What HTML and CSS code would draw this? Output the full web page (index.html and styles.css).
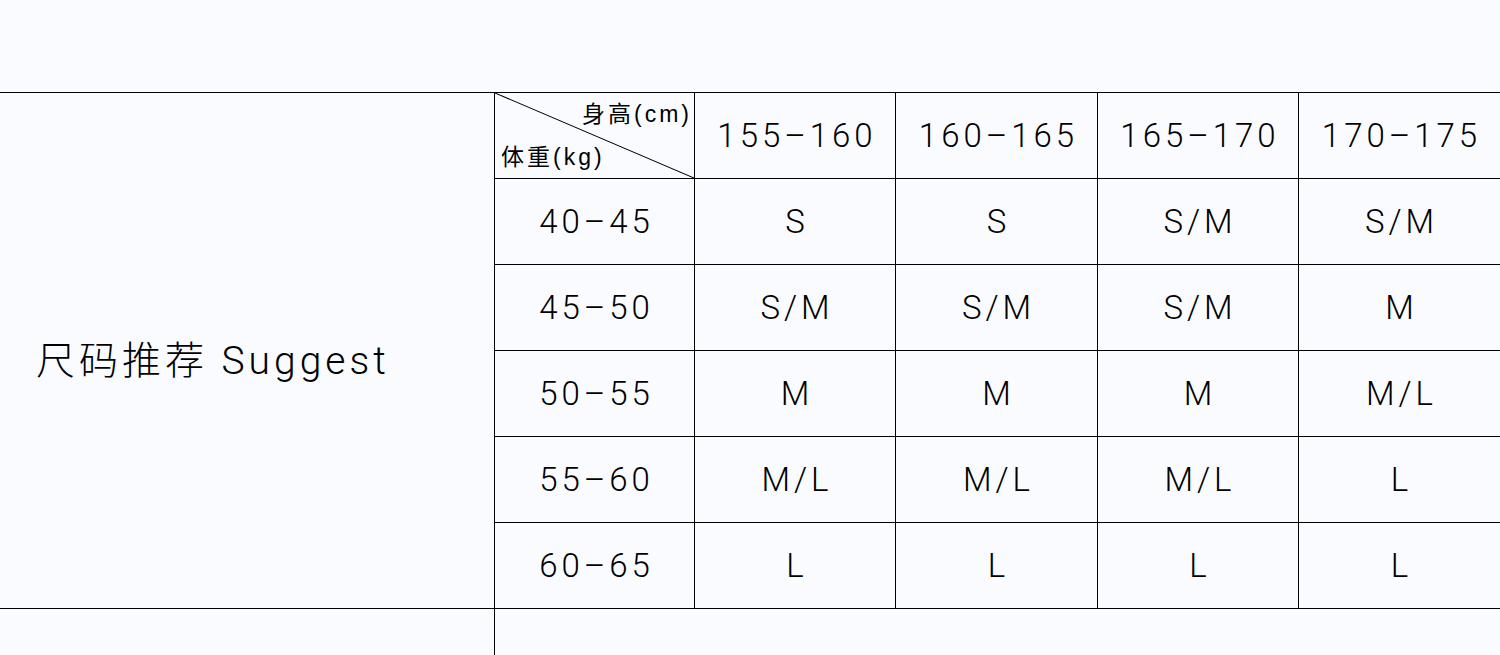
FILE: index.html
```html
<!DOCTYPE html>
<html lang="zh">
<head>
<meta charset="utf-8">
<title>尺码推荐</title>
<link rel="stylesheet" href="styles.css">
</head>
<body>
<div class="page">
  <div class="section">
    <div class="title">尺码推荐 Suggest</div>
    <div class="grid">
      <div class="cell corner">
        <svg class="diag" viewBox="0 0 100 100" preserveAspectRatio="none"><line x1="0" y1="0" x2="100" y2="100" stroke="#000" stroke-width="1" vector-effect="non-scaling-stroke"/></svg>
        <span class="lbl top">身高(cm)</span>
        <span class="lbl bottom">体重(kg)</span>
      </div>
      <div class="cell">155–160</div>
      <div class="cell">160–165</div>
      <div class="cell">165–170</div>
      <div class="cell last">170–175</div>

      <div class="cell">40–45</div>
      <div class="cell">S</div>
      <div class="cell">S</div>
      <div class="cell">S/M</div>
      <div class="cell last">S/M</div>

      <div class="cell">45–50</div>
      <div class="cell">S/M</div>
      <div class="cell">S/M</div>
      <div class="cell">S/M</div>
      <div class="cell last">M</div>

      <div class="cell">50–55</div>
      <div class="cell">M</div>
      <div class="cell">M</div>
      <div class="cell">M</div>
      <div class="cell last">M/L</div>

      <div class="cell">55–60</div>
      <div class="cell">M/L</div>
      <div class="cell">M/L</div>
      <div class="cell">M/L</div>
      <div class="cell last">L</div>

      <div class="cell end">60–65</div>
      <div class="cell end">L</div>
      <div class="cell end">L</div>
      <div class="cell end">L</div>
      <div class="cell end last">L</div>
    </div>
  </div>
  <div class="footer">
    <div class="footer-left"></div>
  </div>
</div>
</body>
</html>
```

FILE: styles.css
```css
html, body {
  margin: 0;
  padding: 0;
  background: #f9fbff;
}
.page {
  padding-top: 92px;
  font-family: Roboto, "Noto Sans CJK SC", sans-serif;
  color: #000;
}
.section {
  display: flex;
  border-top: 1px solid #000;
  border-bottom: 1px solid #000;
}
.title {
  box-sizing: border-box;
  width: 495px;
  border-right: 1px solid #000;
  display: flex;
  align-items: center;
  padding-left: 36px;
  padding-top: 12px;
  font-size: 39px;
  font-weight: 300;
  letter-spacing: 4px;
}
.grid {
  flex: 1;
  display: grid;
  grid-template-columns: 200px 201px 202px 201px 1fr;
  grid-template-rows: 86px 86px 86px 86px 86px 85px;
}
.cell {
  box-sizing: border-box;
  border-right: 1px solid #000;
  border-bottom: 1px solid #000;
  display: flex;
  align-items: center;
  justify-content: center;
  font-size: 33px;
  font-weight: 300;
  letter-spacing: 4px;
  padding-left: 4px;
}
.cell.last { border-right: none; }
.cell.end { border-bottom: none; }
.corner {
  position: relative;
  flex-direction: column;
  align-items: stretch;
  justify-content: space-between;
  padding: 3px 2px 3px 6px;
  font-family: "Liberation Sans", "Noto Sans CJK SC", sans-serif;
  font-size: 23px;
  font-weight: 400;
  letter-spacing: 3px;
}
.diag {
  position: absolute;
  left: 0;
  top: 0;
  width: 100%;
  height: 100%;
}
.lbl { position: relative; line-height: 36px; }
.lbl.top { align-self: flex-end; }
.lbl.bottom { align-self: flex-start; }
.footer {
  height: 46px;
  display: flex;
}
.footer-left {
  box-sizing: border-box;
  width: 495px;
  border-right: 1px solid #000;
}
```
